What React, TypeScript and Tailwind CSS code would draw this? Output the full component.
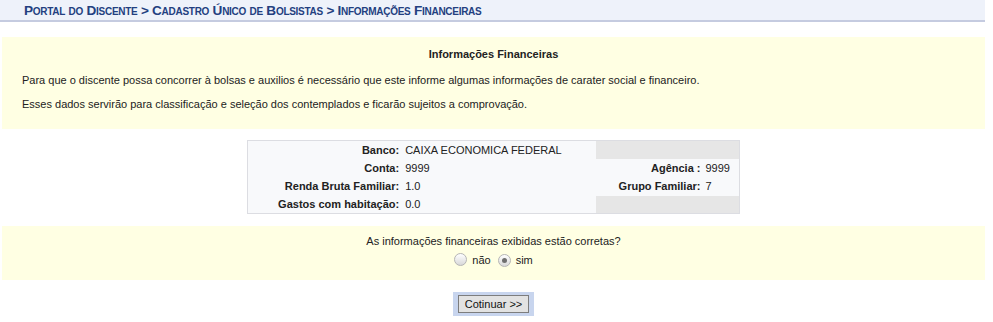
import React from "react";

const font = { fontFamily: '"Liberation Sans", Arial, sans-serif' };

function Radio({ checked }: { checked?: boolean }) {
  return (
    <span className="inline-flex w-[13px] h-[13px] rounded-full border border-[#b5b5b5] bg-gradient-to-b from-[#ffffff] to-[#d9d9d9] items-center justify-center">
      {checked && <span className="w-[5px] h-[5px] rounded-full bg-[#6f6f6f]" />}
    </span>
  );
}

export default function App() {
  return (
    <div style={font} className="w-[993px] h-[322px] bg-white text-[11px] text-[#222] overflow-hidden">
      <div className="w-[985px]">
        {/* Breadcrumb */}
        <div className="h-[22px] bg-[#eef2fa] border-b-2 border-[#c5cbe0] pl-[24px] leading-[22px] text-[13.6px] tracking-[-0.28px] font-bold text-[#233f80] [font-variant:small-caps]">
          Portal do Discente &gt; Cadastro Único de Bolsistas &gt; Informações Financeiras
        </div>

        {/* Descrição */}
        <div className="ml-[2px] mt-[15px] h-[92px] bg-[#ffffe3] pt-[10px] px-[20px]">
          <p className="text-center font-bold leading-[14px]">Informações Financeiras</p>
          <p className="mt-[12px] leading-[14px]">
            Para que o discente possa concorrer à bolsas e auxilios é necessário que este informe algumas informações de carater social e financeiro.
          </p>
          <p className="mt-[10px] leading-[14px]">
            Esses dados servirão para classificação e seleção dos contemplados e ficarão sujeitos a comprovação.
          </p>
        </div>

        {/* Dados */}
        <div className="flex justify-center mt-[11px] pl-[2px]">
          <table className="w-[493px] border border-[#dcdde2] bg-[#f8f9fb] border-collapse">
            <tbody>
              <tr className="h-[18px]">
                <th className="w-[156px] text-right font-bold pr-[4px]">Banco:</th>
                <td className="w-[193px] pl-[2px]">CAIXA ECONOMICA FEDERAL</td>
                <td colSpan={2} className="bg-[#e6e6e6]"></td>
              </tr>
              <tr className="h-[19px]">
                <th className="text-right font-bold pr-[4px]">Conta:</th>
                <td className="pl-[2px]">9999</td>
                <th className="w-[108px] text-right font-bold pr-[3px]">Agência :</th>
                <td className="w-[36px] pl-[2px]">9999</td>
              </tr>
              <tr className="h-[18px]">
                <th className="text-right font-bold pr-[4px]">Renda Bruta Familiar:</th>
                <td className="pl-[2px]">1.0</td>
                <th className="text-right font-bold pr-[3px]">Grupo Familiar:</th>
                <td className="pl-[2px]">7</td>
              </tr>
              <tr className="h-[18px]">
                <th className="text-right font-bold pr-[4px]">Gastos com habitação:</th>
                <td className="pl-[2px]">0.0</td>
                <td colSpan={2} className="bg-[#e6e6e6]"></td>
              </tr>
            </tbody>
          </table>
        </div>

        {/* Confirmação */}
        <div className="ml-[2px] mt-[12px] h-[54px] bg-[#ffffe3] pt-[8px] flex flex-col items-center">
          <p className="leading-[14px]">As informações financeiras exibidas estão corretas?</p>
          <div className="mt-[4px] flex items-center gap-[5px] leading-[14px]">
            <Radio />
            <span>não</span>
            <span className="ml-[2px]"><Radio checked /></span>
            <span>sim</span>
          </div>
        </div>

        {/* Ação */}
        <div className="flex justify-center mt-[12px] pl-[2px]">
          <div className="bg-[#c8d5ee] px-[5px] py-[3px]">
            <button className="h-[18px] px-[6px] bg-[#e2e2e2] border border-[#7d7d7d] text-[11px] leading-[14px] text-[#111]">
              Cotinuar &gt;&gt;
            </button>
          </div>
        </div>
      </div>
    </div>
  );
}
